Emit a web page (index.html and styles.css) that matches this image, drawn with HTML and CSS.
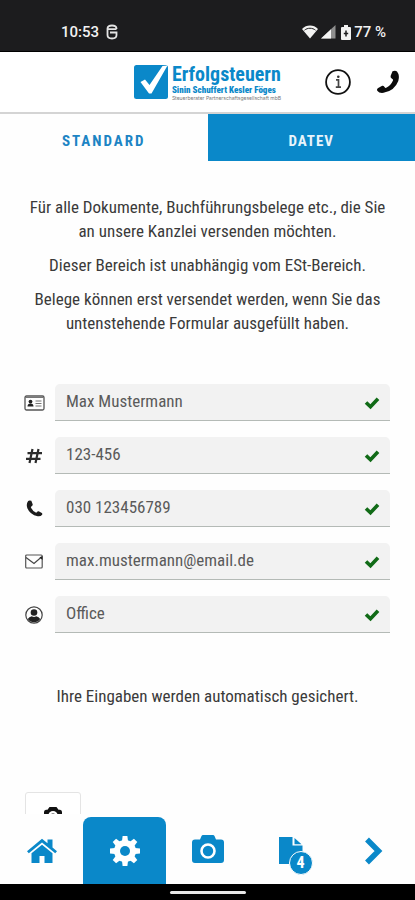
FILE: index.html
```html
<!DOCTYPE html>
<html lang="de">
<head>
<meta charset="utf-8">
<meta name="viewport" content="width=device-width, initial-scale=1">
<title>Erfolgsteuern</title>
<link rel="stylesheet" href="styles.css">
</head>
<body>
<div class="statusbar">
  <div class="status-group">
    <span>10:53</span>
    <svg class="status-app" width="12" height="16" viewBox="0 0 12 16" fill="none" stroke="#e4e4e4" stroke-width="1.800"><path d="M10.500 5V4.500C10.500 2.500 9 1.500 6 1.500S1.500 2.500 1.500 4.500V11C1.500 13.500 3 14.500 6 14.500S10.500 13.500 10.500 11V8.500H4M1.500 5.200H10.500"/></svg>
  </div>
  <div class="status-group status-right">
    <svg width="16" height="14" viewBox="0 0 16 14"><path d="M0 4C4.500-.6 11.500-.6 16 4L8 13.500Z" fill="#f2f2f2"/><path d="M2.500 5.200C5.500 2.600 10.500 2.600 13.500 5.200" fill="none" stroke="#1c1c1e" stroke-width="1"/></svg>
    <svg width="15" height="14" viewBox="0 0 15 14"><path d="M0 13.500L14.500 0V13.500Z" fill="#8f8f8f"/><path d="M0 13.500L10 4.200V13.500Z" fill="#f5f5f5"/></svg>
    <svg class="battery" width="10" height="15" viewBox="0 0 10 15"><path d="M3 0H7V2H9Q10 2 10 3V14Q10 15 9 15H1Q0 15 0 14V3Q0 2 1 2H3Z" fill="#f2f2f2"/><path d="M5 5.500V11.500M2.800 8.500H7.200" stroke="#1c1c1e" stroke-width="1.500"/></svg>
    <span>77 %</span>
  </div>
</div>

<header class="header">
  <a class="logo" href="#">
    <svg width="34" height="34" viewBox="0 0 34 34"><rect width="34" height="34" rx="2.500" fill="#0a88c9"/><path d="M6.500 17L11 14.500L15.500 20L28.500 1L33.500 .5L17.500 28.500H15Z" fill="#fff"/></svg>
    <span class="logo-text">
      <span class="logo-name">Erfolgsteuern</span>
      <span class="logo-partners">Sinin Schuffert Kesler Föges</span>
      <span class="logo-legal">Steuerberater Partnerschaftsgesellschaft mbB</span>
    </span>
  </a>
  <div class="header-actions">
    <button class="icon-button" type="button" aria-label="Information"><svg width="26" height="26" viewBox="0 0 26 26"><circle cx="13" cy="13" r="11.900" fill="none" stroke="#111" stroke-width="1.800"/><path d="M11 10.800H13.500V18M10.800 18.200H16" fill="none" stroke="#444" stroke-width="1.700"/><circle cx="13.300" cy="7.800" r="1.300" fill="#333"/></svg></button>
    <button class="icon-button" type="button" aria-label="Anrufen"><svg width="24" height="24" viewBox="0 0 24 24"><path d="M16.500 1.200Q19.500 .2 21 1.500Q24 5.500 22.300 11Q18.500 21 7.500 22.800Q3.500 23.500 1.200 20.700Q.4 18.800 2.200 18L6.200 15.800Q7.500 15.500 8.500 17Q9.300 18.200 10.200 17.800Q14.600 15.800 17 10.500Q17.500 9.500 16 8.700Q14.200 7.500 14.600 6Z" fill="#0b0b0b"/></svg></button>
  </div>
</header>

<nav class="tabs" aria-label="Bereich">
  <a class="tab tab-current" href="#standard">STANDARD</a>
  <a class="tab tab-filled" href="#datev">DATEV</a>
</nav>

<main class="content">
  <div class="intro">
    <p>Für alle Dokumente, Buchführungsbelege etc., die Sie an unsere Kanzlei versenden möchten.</p>
    <p>Dieser Bereich ist unabhängig vom ESt-Bereich.</p>
    <p>Belege können erst versendet werden, wenn Sie das untenstehende Formular ausgefüllt haben.</p>
  </div>

  <form class="form">
    <div class="field">
      <label for="name" aria-label="Name"><svg width="21" height="16" viewBox="0 0 21 16"><rect x="1" y="1" width="19" height="14" rx="1.500" fill="none" stroke="#555" stroke-width="1.300"/><path d="M1 2.500H20" stroke="#777"/><circle cx="6.500" cy="6.600" r="1.900" fill="#222"/><path d="M3.500 11.500Q3.500 8.500 6.500 8.500T9.500 11.500Z" fill="#222"/><path d="M11.500 6H17.500M11.500 8.500H17.500M11.500 11H17.500" stroke="#777"/></svg></label>
      <input id="name" type="text" value="Max Mustermann">
      <svg class="check" width="16" height="14" viewBox="0 0 16 14"><path d="M2 6.500L6.500 10.800L14 2.700" fill="none" stroke="#116b17" stroke-width="3.600"/></svg>
    </div>
    <div class="field">
      <label for="number" aria-label="Mandantennummer"><svg width="18" height="16" viewBox="0 0 18 16"><path d="M7.500 1L4.500 15M13.500 1L10.500 15M2.500 5.200H17M1 10.800H15.500" fill="none" stroke="#2c2c2c" stroke-width="2.200"/></svg></label>
      <input id="number" type="text" value="123-456">
      <svg class="check" width="16" height="14" viewBox="0 0 16 14"><path d="M2 6.500L6.500 10.800L14 2.700" fill="none" stroke="#116b17" stroke-width="3.600"/></svg>
    </div>
    <div class="field">
      <label for="phone" aria-label="Telefon"><svg width="17" height="17" viewBox="0 0 24 24"><path d="M7.500 1.200Q4.500 .2 3 1.500Q0 5.500 1.700 11Q5.500 21 16.500 22.800Q20.500 23.500 22.800 20.700Q23.600 18.800 21.800 18L17.800 15.800Q16.500 15.500 15.500 17Q14.700 18.200 13.800 17.800Q9.400 15.800 7 10.500Q6.500 9.500 8 8.700Q9.800 7.500 9.400 6Z" fill="#1c1c1c"/></svg></label>
      <input id="phone" type="tel" value="030 123456789">
      <svg class="check" width="16" height="14" viewBox="0 0 16 14"><path d="M2 6.500L6.500 10.800L14 2.700" fill="none" stroke="#116b17" stroke-width="3.600"/></svg>
    </div>
    <div class="field">
      <label for="email" aria-label="E-Mail"><svg width="18" height="15" viewBox="0 0 18 15"><rect x=".7" y="1" width="16.500" height="13" rx="1" fill="none" stroke="#555" stroke-width="1.200"/><path d="M1 3.500L9 9.500L16.500 3" fill="none" stroke="#444" stroke-width="1.200"/><path d="M14.500 3.500L17.500 2V6Z" fill="#222"/></svg></label>
      <input id="email" type="email" value="max.mustermann@email.de">
      <svg class="check" width="16" height="14" viewBox="0 0 16 14"><path d="M2 6.500L6.500 10.800L14 2.700" fill="none" stroke="#116b17" stroke-width="3.600"/></svg>
    </div>
    <div class="field">
      <label for="contact" aria-label="Ansprechpartner"><svg width="18" height="18" viewBox="0 0 18 18"><circle cx="9" cy="9" r="8.200" fill="none" stroke="#444" stroke-width="1.200"/><circle cx="9" cy="6.500" r="3.300" fill="#222"/><path d="M2.800 13Q4 10.800 6.800 10.300Q9 11.800 11.200 10.300Q14 10.800 15.200 13Q12.800 16.300 9 16.300T2.800 13Z" fill="#222"/></svg></label>
      <input id="contact" type="text" value="Office">
      <svg class="check" width="16" height="14" viewBox="0 0 16 14"><path d="M2 6.500L6.500 10.800L14 2.700" fill="none" stroke="#116b17" stroke-width="3.600"/></svg>
    </div>
  </form>

  <p class="saved">Ihre Eingaben werden automatisch gesichert.</p>

  <button class="tile" type="button" aria-label="Foto aufnehmen"><svg width="20" height="18" viewBox="0 0 20 18"><path d="M1 6Q1 4 3 3.700H4.500L6.500 1H13.500L15.500 3.700H17Q19 4 19 6V17H1Z" fill="#111"/><circle cx="10" cy="9.500" r="4.600" fill="#fff"/><circle cx="10" cy="9" r="2" fill="#888"/></svg></button>
</main>

<nav class="bottom-nav" aria-label="Navigation">
  <a class="nav-item" href="#home" aria-label="Start"><svg width="30" height="26" viewBox="0 0 30 26"><path d="M0 13.200L15 .8L20.500 5.300V1.500H25.500V9.500L30 13.200L28.200 15.200L15 4.500L1.800 15.200Z" fill="#0a88c9"/><path d="M4.500 15.200L15 6.800L25.500 15.200V25H17.500V18H12.500V25H4.500Z" fill="#0a88c9"/></svg></a>
  <a class="nav-item nav-active" href="#settings" aria-label="Einstellungen" aria-current="page"><svg width="30" height="30" viewBox="0 0 30 30"><g fill="#fff"><circle cx="15" cy="15" r="11"/><path d="M12 5L12.600 0H17.400L18 5V25L17.400 30H12.600L12 25Z"/><path d="M12 5L12.600 0H17.400L18 5V25L17.400 30H12.600L12 25Z" transform="rotate(45 15 15)"/><path d="M12 5L12.600 0H17.400L18 5V25L17.400 30H12.600L12 25Z" transform="rotate(90 15 15)"/><path d="M12 5L12.600 0H17.400L18 5V25L17.400 30H12.600L12 25Z" transform="rotate(135 15 15)"/></g><circle cx="15" cy="15" r="5" fill="#0a88c9"/></svg></a>
  <a class="nav-item nav-camera" href="#camera" aria-label="Kamera"><svg width="32" height="28" viewBox="0 0 32 28"><path d="M3 4.500H8L9.500 1Q10 0 11 0H21Q22 0 22.500 1L24 4.500H29Q32 4.500 32 7.500V25Q32 28 29 28H3Q0 28 0 25V7.500Q0 4.500 3 4.500Z" fill="#0a88c9"/><circle cx="16" cy="16" r="6.500" fill="none" stroke="#fff" stroke-width="2.600"/></svg></a>
  <a class="nav-item" href="#documents" aria-label="Dokumente"><span class="doc"><svg width="24" height="28" viewBox="0 0 24 28"><path d="M0 0H13.500V8.500H23.500V27H0Z" fill="#0a88c9"/><path d="M15.500 1L22.500 7.200H15.500Z" fill="#0a88c9"/></svg><span class="badge">4</span></span></a>
  <a class="nav-item" href="#next" aria-label="Weiter"><svg width="18" height="28" viewBox="0 0 18 28"><path d="M2 2.500L13.500 14L2 25.500" fill="none" stroke="#0a88c9" stroke-width="5.500"/></svg></a>
</nav>
<div class="gesture"><span class="gesture-handle"></span></div>
</body>
</html>
```
FILE: styles.css
```css
* {
  box-sizing: border-box;
}

body {
  margin: 0;
  height: 100vh;
  display: flex;
  flex-direction: column;
  overflow: hidden;
  background: #fefefe;
  color: #3a3a3a;
  font-family: "Roboto Condensed", "Liberation Sans Narrow", Roboto, sans-serif;
  font-size: 17px;
  font-weight: 400;
  line-height: 24px;
}

a {
  text-decoration: none;
}

button {
  padding: 0;
  border: 0;
  background: none;
}

svg {
  display: block;
}

.statusbar {
  flex: none;
  display: flex;
  justify-content: space-between;
  height: 52px;
  padding: 20px 29px 0 61px;
  border-bottom: 1px solid #000;
  background: #1c1c1e;
  color: #f2f2f2;
  font-family: Roboto, sans-serif;
  font-size: 15px;
  font-weight: 500;
}

.status-group {
  display: flex;
  align-items: center;
  height: 24px;
  gap: 7px;
}

.status-right {
  gap: 3px;
}

.battery {
  margin-left: 2px;
}

.header {
  flex: none;
  display: grid;
  grid-template-columns: 1fr auto 1fr;
  align-items: center;
  height: 62px;
  border-bottom: 2px solid #d4d4d4;
  background: #fff;
}

.logo {
  grid-column: 2;
  display: flex;
  align-items: center;
  gap: 4px;
  color: #0a88c9;
}

.logo-text {
  display: flex;
  flex-direction: column;
  white-space: nowrap;
}

.logo-name {
  font-size: 20px;
  line-height: 22px;
  font-weight: 700;
}

.logo-partners {
  font-size: 9px;
  line-height: 10px;
  font-weight: 900;
}

.logo-legal {
  color: #777;
  font-family: Inter, sans-serif;
  font-size: 5px;
  font-weight: 400;
  line-height: 6px;
}

.header-actions {
  display: flex;
  justify-content: flex-end;
  align-items: center;
  gap: 25px;
  padding-right: 15px;
}

.tabs {
  flex: none;
  display: grid;
  grid-template-columns: 1fr 1fr;
}

.tab {
  display: flex;
  align-items: center;
  justify-content: center;
  height: 47px;
  padding-top: 6px;
  font-size: 15px;
  font-weight: 700;
}

.tab-current {
  color: #1c84c4;
  letter-spacing: 2px;
}

.tab-filled {
  background: #0a88c9;
  color: #e8f4fb;
  letter-spacing: 1px;
}

.content {
  flex: 1;
  min-height: 0;
  overflow: hidden;
  padding: 34px 25px 0;
}

p {
  margin: 0;
}

.intro {
  display: flex;
  flex-direction: column;
  gap: 10px;
  text-align: center;
}

.form {
  display: flex;
  flex-direction: column;
  gap: 16px;
  margin-top: 49px;
}

.field {
  position: relative;
  display: grid;
  grid-template-columns: 30px 1fr;
  align-items: center;
}

.field label {
  display: flex;
  justify-content: center;
  width: 18px;
}

.field label svg {
  flex: none;
}

.field input {
  width: 100%;
  height: 37px;
  padding: 0 40px 2px 11px;
  border: 0;
  border-bottom: 1px solid #b4bab6;
  border-radius: 5px 5px 0 0;
  background: #f2f2f2;
  color: #5a5a5a;
  font: inherit;
}

.check {
  position: absolute;
  right: 10px;
  top: 12px;
}

.saved {
  margin-top: 51px;
  text-align: center;
}

.tile {
  display: flex;
  justify-content: center;
  width: 56px;
  height: 56px;
  margin-top: 84px;
  padding-top: 13px;
  border: 1px solid #e4e4e4;
  border-radius: 3px;
  background: #fff;
}

.bottom-nav {
  flex: none;
  display: grid;
  grid-template-columns: repeat(5, 1fr);
  height: 70px;
  padding-top: 3px;
  background: #fefefe;
}

.nav-item {
  display: flex;
  align-items: center;
  justify-content: center;
}

.nav-active {
  border-radius: 8px 8px 0 0;
  background: #0a88c9;
}

.nav-camera {
  padding-bottom: 4px;
}

.doc {
  position: relative;
}

.badge {
  position: absolute;
  left: 10px;
  top: 14px;
  width: 24px;
  height: 24px;
  border: 1px solid #fefefe;
  border-radius: 50%;
  background: #0a88c9;
  color: #fff;
  font-size: 16px;
  line-height: 22px;
  font-weight: 700;
  text-align: center;
}

.gesture {
  flex: none;
  display: flex;
  align-items: center;
  justify-content: center;
  height: 16px;
  background: #000;
}

.gesture-handle {
  width: 76px;
  height: 3px;
  border-radius: 2px;
  background: #e8e8e8;
}
```
